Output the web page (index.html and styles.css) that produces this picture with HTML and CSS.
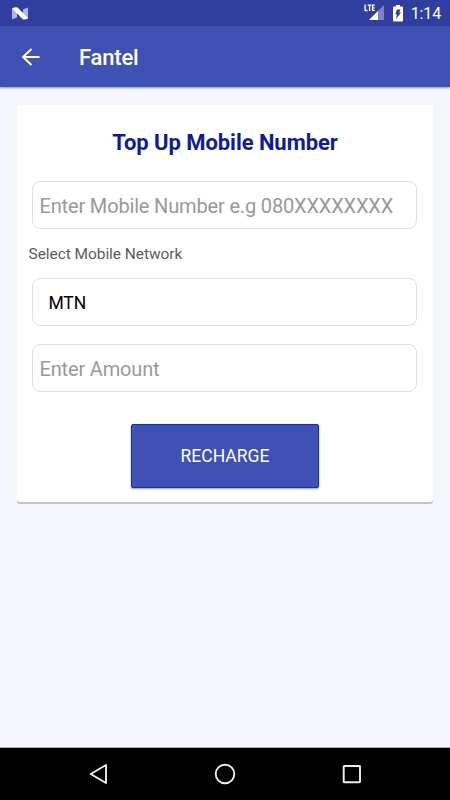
FILE: index.html
```html
<!DOCTYPE html>
<html lang="en">
<head>
<meta charset="utf-8">
<title>Fantel</title>
<link rel="stylesheet" href="styles.css">
</head>
<body>
<div class="screen">
  <div class="status">
    <svg class="status-logo" width="16" height="13" viewBox="0 0 16 13">
      <path d="M0 1.200 5 3v7.500L0 12.600zM16 .5l-5 2V9l5 3z" fill="#b0b5df"/>
      <path d="M0 1.200Q3.500-.5 5.500.5L16 11q-2 2-5 1.500z" fill="#fff"/>
    </svg>
    <div class="status-right">
      <svg class="signal" width="21" height="17" viewBox="0 0 21 17">
        <path d="M20 1v15H5z" fill="#7c84c4"/>
        <path d="M14 7v9H5z" fill="#fff"/>
        <path d="M1.100 .5v6h2.400M3.600 1.100h3.800M5.600 1.100V7M10.800 1.100H8.500v5.300h2.300M8.500 3.800h2.100" fill="none" stroke="#fff" stroke-width="1.300"/>
      </svg>
      <svg class="battery" width="10" height="17" viewBox="0 0 10 17">
        <path d="M3 0h4v1.600h2q1 0 1 1V15.500q0 1-1 1H1q-1 0-1-1V2.600q0-1 1-1h2z" fill="#fff"/>
        <path d="M3.800 4.400h3.800L6.200 7.500h1.900L3 14l1-4.500H2.400z" fill="#303f9f"/>
      </svg>
      <span class="clock">1:14</span>
    </div>
  </div>
  <header class="appbar">
    <svg class="back" width="19" height="18" viewBox="0 0 19 18">
      <path d="M18.500 9H2M10.500 1 2 9l8.500 8" fill="none" stroke="#fff" stroke-width="1.900"/>
    </svg>
    <span class="appbar-title">Fantel</span>
  </header>
  <main class="content">
    <section class="card">
      <h1 class="heading"><span>Top Up Mobile Number</span></h1>
      <div class="field field-number"><span>Enter Mobile Number e.g 080XXXXXXXX</span></div>
      <div class="label"><span>Select Mobile Network</span></div>
      <div class="field field-select"><span>MTN</span></div>
      <div class="field field-amount"><span>Enter Amount</span></div>
      <div class="button"><span>RECHARGE</span></div>
    </section>
  </main>
  <nav class="navbar">
    <svg width="20" height="22" viewBox="0 0 20 22"><path d="M18 2v18L2.700 11z" fill="none" stroke="#eee" stroke-width="1.900" stroke-linejoin="round"/></svg>
    <svg width="22" height="22" viewBox="0 0 22 22"><circle cx="11" cy="11" r="9.300" fill="none" stroke="#eee" stroke-width="1.900"/></svg>
    <svg width="20" height="20" viewBox="0 0 20 20"><rect x="1.700" y="2" width="16.300" height="16.300" rx=".5" fill="none" stroke="#eee" stroke-width="1.900"/></svg>
  </nav>
</div>
</body>
</html>
```
FILE: styles.css
```css
* { box-sizing: border-box; }
body {
  margin: 0;
  font-family: Roboto, "Liberation Sans", sans-serif;
}
svg { display: block; flex: none; }
.screen {
  width: 450px;
  height: 800px;
  display: flex;
  flex-direction: column;
  background: #f5f6fb;
  overflow: hidden;
}
.status {
  height: 26px;
  flex: none;
  display: flex;
  justify-content: space-between;
  padding: 0 9px 0 12px;
  background: #303f9f;
  color: #fff;
}
.status-logo { margin-top: 7px; }
.status-right { display: flex; }
.signal { margin-top: 4px; }
.battery { margin: 5px 8px 0 8px; }
.clock { font-size: 16px; line-height: 28px; letter-spacing: -.15px; }
.appbar {
  height: 61px;
  flex: none;
  display: flex;
  align-items: center;
  gap: 38px;
  padding: 1px 0 0 21px;
  background: #3f51b5;
  color: #fff;
  box-shadow: 0 1px 2px rgba(0, 0, 0, .4);
}
.appbar-title {
  margin-left: 1px;
  font-size: 22px;
  font-weight: 500;
  letter-spacing: -.2px;
}
.content {
  flex: 1;
  padding: 18px 17px 0;
}
.card {
  height: 397px;
  padding: 0 16px 0 15px;
  background: #fff;
  border-radius: 3px;
  box-shadow: 0 2px 0 #c4c4c4;
}
.heading {
  margin: 0;
  padding: 25px 0 0 1px;
  height: 76px;
  text-align: center;
  font-size: 22px;
  line-height: 26px;
  font-weight: 700;
  letter-spacing: -.05px;
  color: #0d1c9c;
}
.field {
  height: 47.500px;
  display: flex;
  align-items: center;
  border: 1px solid #e0e0e0;
  border-radius: 8px;
  padding: 2px 6.500px 0;
  font-size: 20px;
  letter-spacing: -.16px;
  color: #999;
  white-space: nowrap;
}
.label {
  height: 49.500px;
  margin-left: -3.500px;
  font-size: 15.500px;
  line-height: 51px;
  letter-spacing: -.06px;
  color: #5c5c5c;
}
.field-select {
  padding-left: 15.500px;
  font-size: 17.500px;
  color: #000;
}
.field-amount { margin-top: 18.500px; }
.button {
  width: 188px;
  height: 64px;
  margin: 32px 0 0 99px;
  display: flex;
  align-items: center;
  justify-content: center;
  border: 1px solid #0e2fb8;
  border-radius: 2px;
  background: #3f51b5;
  box-shadow: 0 1px 2px rgba(0, 0, 0, .4);
  color: #fff;
  font-size: 17.500px;
}
.navbar {
  height: 53px;
  flex: none;
  display: flex;
  align-items: center;
  justify-content: space-between;
  border-top: 1px solid #aaa;
  padding: 0 88px;
  background: #000;
}
```
